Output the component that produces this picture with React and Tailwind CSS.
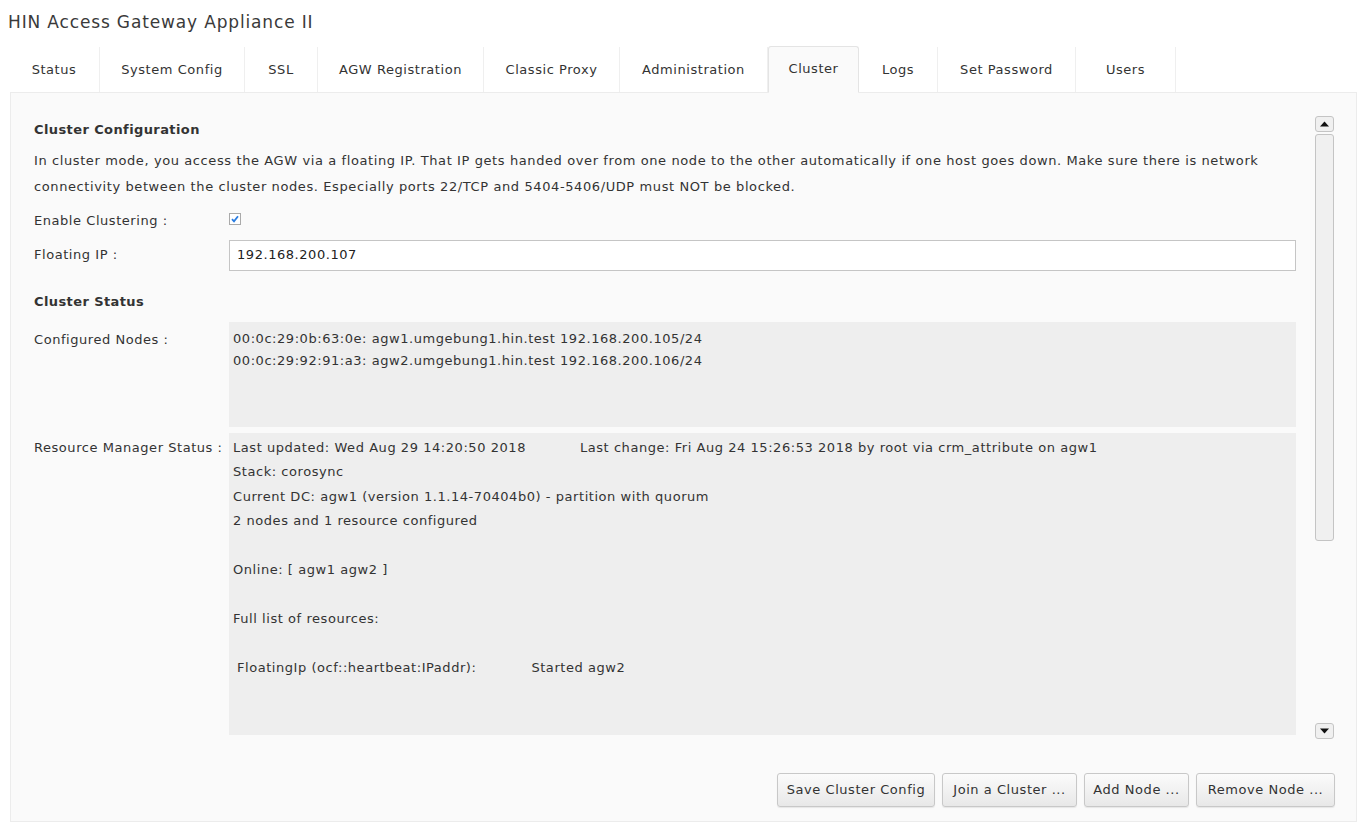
import React from 'react'

const tabs = [
  { name: 'Status', w: 'w-[91px]' },
  { name: 'System Config', w: 'w-[145px]' },
  { name: 'SSL', w: 'w-[73px]' },
  { name: 'AGW Registration', w: 'w-[166px]' },
  { name: 'Classic Proxy', w: 'w-[136px]' },
  { name: 'Administration', w: 'w-[148px]' },
  { name: 'Cluster', w: 'w-[91px]', active: true },
  { name: 'Logs', w: 'w-[79px]' },
  { name: 'Set Password', w: 'w-[138px]' },
  { name: 'Users', w: 'w-[100px]' },
]

const rmLines = [
  'Stack: corosync',
  'Current DC: agw1 (version 1.1.14-70404b0) - partition with quorum',
  '2 nodes and 1 resource configured',
  '\u00a0',
  'Online: [ agw1 agw2 ]',
  '\u00a0',
  'Full list of resources:',
  '\u00a0',
]

const buttons = [
  { label: 'Save Cluster Config', w: 'w-[158px]' },
  { label: 'Join a Cluster ...', w: 'w-[135px]' },
  { label: 'Add Node ...', w: 'w-[105px]' },
  { label: 'Remove Node ...', w: 'w-[139px]' },
]

function Btn({ children, w }) {
  return (
    <button className={`${w} h-[34px] border border-[#c8c8c8] rounded-[3px] bg-gradient-to-b from-[#fbfbfb] to-[#e8e8e8] text-[#333] shadow-[0_1px_1px_rgba(0,0,0,0.08)] whitespace-nowrap`}>
      {children}
    </button>
  )
}

function Arrow({ up }) {
  return (
    <div className="w-[19px] h-[16px] border border-[#c4c4c4] rounded-[3px] bg-[#f0f0f0] flex items-center justify-center">
      <svg width="9" height="6" viewBox="0 0 9 6">
        {up ? <path d="M0 5.5 L4.5 0.5 L9 5.5 Z" fill="#111" /> : <path d="M0 0.5 L4.5 5.5 L9 0.5 Z" fill="#111" />}
      </svg>
    </div>
  )
}

export default function App() {
  return (
    <div className="min-h-screen bg-white text-[#333] font-['DejaVu_Sans',sans-serif] text-[13px] tracking-[0.55px] overflow-hidden h-[822px]">
      <div className="pl-[8px] pt-[10px] h-[46px] text-[17px] tracking-[0.85px] text-[#3a3a3a]">HIN Access Gateway Appliance II</div>
      <div className="flex ml-[9px] h-[46px] items-end">
        {tabs.map((t) =>
          t.active ? (
            <div key={t.name} className={`${t.w} h-[47px] -mb-px relative z-10 bg-[#fafafa] border border-[#e4e4e4] border-b-[#fafafa] rounded-t-[3px] flex items-center justify-center pb-[1px] text-[#333]`}>
              {t.name}
            </div>
          ) : (
            <div key={t.name} className={`${t.w} h-[45px] border-r border-[#efefef] flex items-center justify-center text-[#333]`}>
              {t.name}
            </div>
          )
        )}
      </div>
      <div className="ml-[10px] w-[1347px] h-[730px] bg-[#fafafa] border border-[#ececec] flex">
        <div className="flex-1 pl-[23px] pr-[19px]">
          <div className="pt-[27px] font-bold tracking-[0.4px] text-[#333]">Cluster Configuration</div>
          <div className="mt-[8px] leading-[26px] tracking-[0.6px]">
            <div className="whitespace-nowrap">In cluster mode, you access the AGW via a floating IP. That IP gets handed over from one node to the other automatically if one host goes down. Make sure there is network</div>
            <div className="whitespace-nowrap">connectivity between the cluster nodes. Especially ports 22/TCP and 5404-5406/UDP must NOT be blocked.</div>
          </div>
          <div className="flex items-center mt-[10px] h-[22px]">
            <div className="w-[195px]">Enable Clustering :</div>
            <div className="w-[12px] h-[12px] border border-[#aaa] bg-white flex items-center justify-center -mt-[4px]">
              <svg width="8" height="8" viewBox="0 0 8 8"><path d="M1 4.2 L3 6.3 L7 1.3" stroke="#2a7de1" strokeWidth="1.8" fill="none" /></svg>
            </div>
          </div>
          <div className="flex items-center mt-[8px]">
            <div className="w-[195px]">Floating IP :</div>
            <div className="flex-1 h-[31px] border border-[#c5c5c5] bg-white flex items-center px-[7px] text-[#222]">192.168.200.107</div>
          </div>
          <div className="mt-[21px] font-bold tracking-[0.4px]">Cluster Status</div>
          <div className="flex mt-[11px]">
            <div className="w-[195px] pt-[8px]">Configured Nodes :</div>
            <div className="flex-1 h-[105px] bg-[#eeeeee] pl-[4px] pt-[6px] leading-[22px]">
              <div>00:0c:29:0b:63:0e: agw1.umgebung1.hin.test 192.168.200.105/24</div>
              <div>00:0c:29:92:91:a3: agw2.umgebung1.hin.test 192.168.200.106/24</div>
            </div>
          </div>
          <div className="flex mt-[6px]">
            <div className="w-[195px] pt-[5px] whitespace-nowrap">Resource Manager Status :</div>
            <div className="flex-1 h-[302px] bg-[#eeeeee] pl-[4px] pt-[3px] leading-[24.4px]">
              <div className="flex whitespace-nowrap">
                <span>Last updated: Wed Aug 29 14:20:50 2018</span>
                <span className="ml-[54px]">Last change: Fri Aug 24 15:26:53 2018 by root via crm_attribute on agw1</span>
              </div>
              {rmLines.map((l, i) => (
                <div key={i}>{l}</div>
              ))}
              <div className="flex whitespace-nowrap pl-[4px]">
                <span>FloatingIp (ocf::heartbeat:IPaddr):</span>
                <span className="ml-[55px]">Started agw2</span>
              </div>
            </div>
          </div>
          <div className="flex justify-end gap-[7px] mt-[38px] -mr-[39px]">
            {buttons.map((b) => (
              <Btn key={b.label} w={b.w}>{b.label}</Btn>
            ))}
          </div>
        </div>
        <div className="w-[19px] mr-[22px] pt-[23px] flex flex-col">
          <Arrow up />
          <div className="mt-[2px] h-[407px] border border-[#c4c4c4] rounded-[3px] bg-[#f0f0f0]" />
          <div className="mt-[182px]">
            <Arrow />
          </div>
        </div>
      </div>
    </div>
  )
}
